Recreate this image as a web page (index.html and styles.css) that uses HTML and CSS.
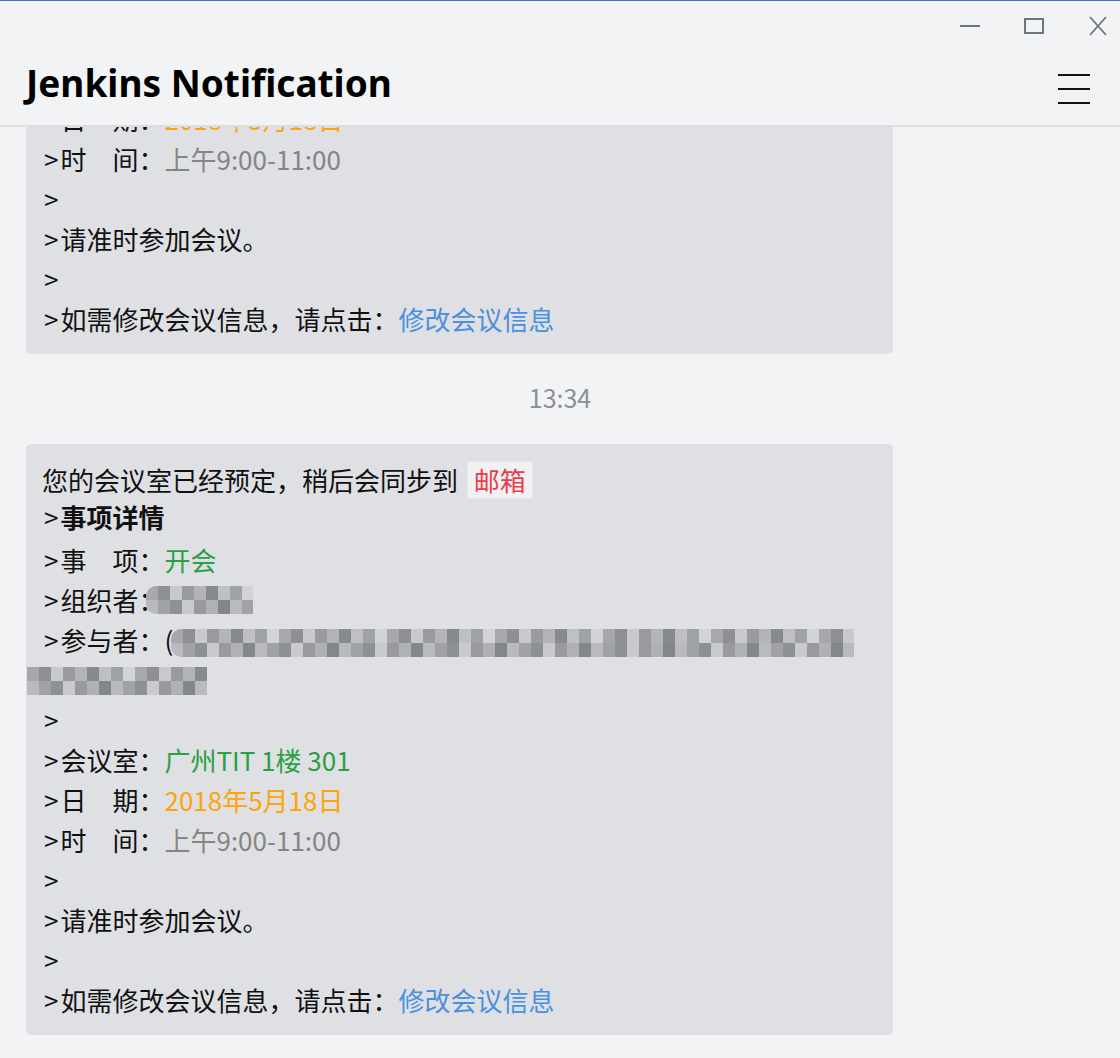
FILE: index.html
```html
<!DOCTYPE html>
<html lang="zh-CN">
<head>
<meta charset="utf-8">
<title>Jenkins Notification</title>
<link rel="stylesheet" href="styles.css">
</head>
<body>
<div class="app">
  <div class="topline"></div>
  <header class="header">
    <div class="controls">
      <svg class="ctl" width="20" height="20" viewBox="0 0 20 20"><line x1="0" y1="10" x2="20" y2="10" stroke="#6b7480" stroke-width="2"/></svg>
      <svg class="ctl" width="20" height="20" viewBox="0 0 20 20"><rect x="1" y="3" width="18" height="14" fill="none" stroke="#6b7480" stroke-width="2"/></svg>
      <svg class="ctl" width="20" height="20" viewBox="0 0 20 20"><path d="M2 1 L18 19 M18 1 L2 19" stroke="#6b7480" stroke-width="1.8" fill="none"/></svg>
    </div>
    <div class="titlebar">
      <h1 class="title">Jenkins Notification</h1>
      <svg class="menu" width="32" height="32" viewBox="0 0 32 32"><path d="M0 2 H32 M0 16 H32 M0 30 H32" stroke="#111" stroke-width="2" fill="none"/></svg>
    </div>
  </header>
  <main class="feed">
    <div class="feed-inner">
      <div class="card">
        <div class="ln l1">您的会议室已经预定，稍后会同步到 <span class="chip">邮箱</span></div>
        <div class="ln l2"><span class="q">&gt;</span><b>事项详情</b></div>
        <div class="ln"><span class="q">&gt;</span>事　项：<span class="green">开会</span></div>
        <div class="ln"><span class="q">&gt;</span>组织者：<span class="mosaic m-org"></span></div>
        <div class="ln"><span class="q">&gt;</span>参与者：(<span class="mosaic m-part"></span></div>
        <div class="ln wrap"><span class="mosaic m-wrap"></span></div>
        <div class="ln"><span class="q">&gt;</span></div>
        <div class="ln"><span class="q">&gt;</span>会议室：<span class="green">广州TIT 1楼 301</span></div>
        <div class="ln"><span class="q">&gt;</span>日　期：<span class="orange">2018年5月18日</span></div>
        <div class="ln"><span class="q">&gt;</span>时　间：<span class="gray">上午9:00-11:00</span></div>
        <div class="ln"><span class="q">&gt;</span></div>
        <div class="ln"><span class="q">&gt;</span>请准时参加会议。</div>
        <div class="ln"><span class="q">&gt;</span></div>
        <div class="ln"><span class="q">&gt;</span>如需修改会议信息，请点击：<a class="link" href="#">修改会议信息</a></div>
      </div>
      <div class="time">13:34</div>
      <div class="card">
        <div class="ln l1">您的会议室已经预定，稍后会同步到 <span class="chip">邮箱</span></div>
        <div class="ln l2"><span class="q">&gt;</span><b>事项详情</b></div>
        <div class="ln"><span class="q">&gt;</span>事　项：<span class="green">开会</span></div>
        <div class="ln"><span class="q">&gt;</span>组织者：<span class="mosaic m-org"></span></div>
        <div class="ln"><span class="q">&gt;</span>参与者：(<span class="mosaic m-part"></span></div>
        <div class="ln wrap"><span class="mosaic m-wrap"></span></div>
        <div class="ln"><span class="q">&gt;</span></div>
        <div class="ln"><span class="q">&gt;</span>会议室：<span class="green">广州TIT 1楼 301</span></div>
        <div class="ln"><span class="q">&gt;</span>日　期：<span class="orange">2018年5月18日</span></div>
        <div class="ln"><span class="q">&gt;</span>时　间：<span class="gray">上午9:00-11:00</span></div>
        <div class="ln"><span class="q">&gt;</span></div>
        <div class="ln"><span class="q">&gt;</span>请准时参加会议。</div>
        <div class="ln"><span class="q">&gt;</span></div>
        <div class="ln"><span class="q">&gt;</span>如需修改会议信息，请点击：<a class="link" href="#">修改会议信息</a></div>
      </div>
    </div>
  </main>
</div>
</body>
</html>
```

FILE: styles.css
```css
* { box-sizing: border-box; }
html, body { margin: 0; padding: 0; }
body {
  background: #f2f3f5;
  font-family: "Noto Sans CJK SC", "Noto Sans", sans-serif;
  color: #111;
  overflow: hidden;
}
.app {
  height: 1058px;
  display: flex;
  flex-direction: column;
}
.topline { height: 1px; background: #3b73c2; flex: none; }
.header {
  flex: none;
  height: 126px;
  background: #f2f3f5;
  border-bottom: 2px solid #dcdde1;
  display: flex;
  flex-direction: column;
  position: relative;
  z-index: 2;
}
.controls {
  height: 50px;
  display: flex;
  justify-content: flex-end;
  align-items: center;
  gap: 44px;
  padding-right: 12px;
}
.ctl { display: block; }
.titlebar {
  flex: 1;
  display: flex;
  justify-content: space-between;
  align-items: center;
  padding: 0 30px 0 26px;
}
.title {
  margin: -11px 0 0 0;
  font-family: "Noto Sans", sans-serif;
  font-weight: 700;
  font-size: 37px;
  color: #000;
  letter-spacing: 0;
}
.menu { display: block; margin-top: 2px; }
.feed {
  flex: 1;
  overflow: hidden;
}
.feed-inner { margin-top: -364px; }
.card {
  background: #dfe0e4;
  border-radius: 5px;
  margin: 0 227px 0 26px;
  padding: 17px 16px 15px 16px;
  font-size: 26px;
}
.ln {
  line-height: 40px;
  height: 40px;
  white-space: nowrap;
}
.q { margin: 0 2px 0 2px; }
.l1 { height: 36px; line-height: 36px; }
.l2 { height: 43px; line-height: 40px; }
.ln b { font-weight: 700; }
.chip {
  display: inline-block;
  margin-left: 3px;
  background: #f1f1f2;
  border: 1px solid #e6e6e8;
  color: #e8404a;
  padding: 0 6px;
  line-height: 36px;
  border-radius: 2px;
}
.green { color: #2a9f43; }
.orange { color: #fba50a; }
.gray { color: #858585; }
.link { color: #4a90de; text-decoration: none; }
.time {
  height: 90px;
  line-height: 86px;
  text-align: center;
  font-size: 25px;
  color: #8a8f99;
}
.mosaic {
  display: inline-block;
  height: 28px;
  vertical-align: -6px;
  border-radius: 10px 0 0 10px;
  background:
    repeating-linear-gradient(90deg, #a7a8ab 0 12px, #8e9095 12px 24px, #c8c9cc 24px 36px, #9a9b9f 36px 48px, #b3b4b7 48px 60px, #878a90 60px 72px, #bfc0c3 72px 84px, #9fa2a6 84px 96px, #d2d3d6 96px 108px) top / 100% 50% no-repeat,
    repeating-linear-gradient(90deg, #b9babd 0 12px, #a1a2a5 12px 24px, #8d9096 24px 36px, #c9cacd 36px 48px, #999a9d 48px 60px, #b0b1b4 60px 72px, #83868b 72px 84px) bottom / 100% 50% no-repeat;
}
.m-org { width: 107px; margin-left: -18px; vertical-align: -3px; }
.m-part { width: 683px; margin-left: -2px; }
.wrap { margin-left: -15px; }
.m-wrap { width: 180px; border-radius: 0; vertical-align: -4px; }
```
